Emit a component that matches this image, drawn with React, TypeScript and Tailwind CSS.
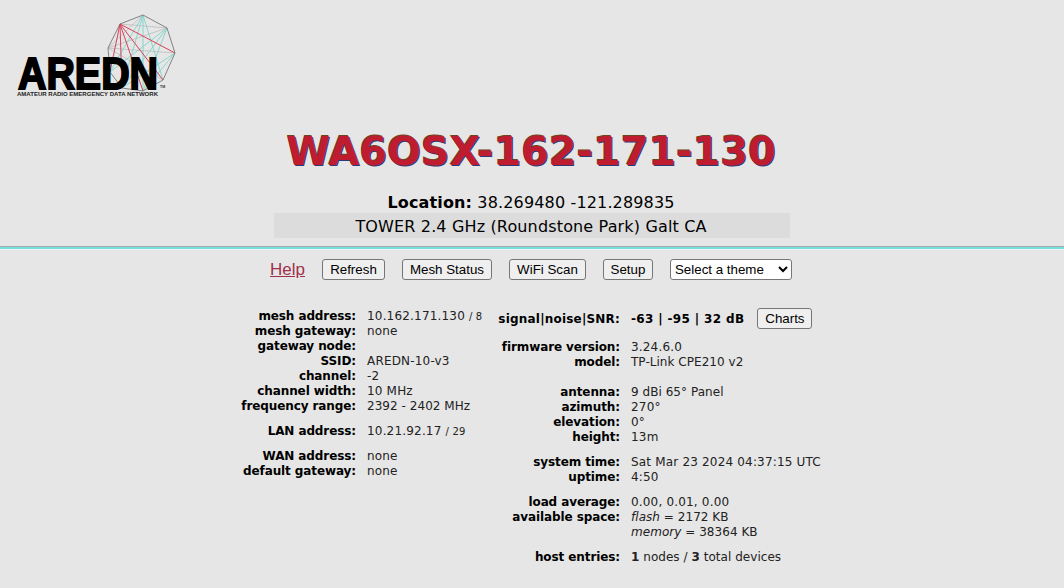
import React from 'react';

const Logo: React.FC = () => {
  const pts: [number, number][] = [
    [143, 15], [167, 28], [175, 53], [163, 80], [143, 91], [122, 88], [110, 72], [108, 48], [120, 24],
  ];
  const red = [[120, 24, 175, 53], [120, 24, 163, 80], [120, 24, 143, 91], [120, 24, 122, 88], [120, 24, 110, 72]];
  const teal = [[143, 15, 163, 80], [143, 15, 143, 91], [143, 15, 122, 88], [167, 28, 143, 91], [167, 28, 122, 88], [167, 28, 110, 72], [175, 53, 122, 88], [175, 53, 143, 91], [143, 15, 110, 72]];
  const gray = [[108, 48, 175, 53], [108, 48, 163, 80], [120, 24, 167, 28], [108, 48, 143, 15], [108, 48, 167, 28]];
  return (
    <svg width="200" height="110" viewBox="0 0 200 110" className="block">
      {gray.map((l, i) => <line key={i} x1={l[0]} y1={l[1]} x2={l[2]} y2={l[3]} stroke="#bdbdbd" strokeWidth="0.8" />)}
      {teal.map((l, i) => <line key={i} x1={l[0]} y1={l[1]} x2={l[2]} y2={l[3]} stroke="#7fd4c8" strokeWidth="0.9" />)}
      {red.map((l, i) => <line key={i} x1={l[0]} y1={l[1]} x2={l[2]} y2={l[3]} stroke="#d9425a" strokeWidth="1" />)}
      <polygon points={pts.map(p => p.join(',')).join(' ')} fill="none" stroke="#777" strokeWidth="0.9" />
      <text x="18" y="88.5" textLength="140" lengthAdjust="spacingAndGlyphs" fontFamily="Liberation Sans" fontWeight="700" fontSize="45" stroke="#000" strokeWidth="2" fill="#000">AREDN</text>
      <text x="17" y="96" textLength="141" lengthAdjust="spacingAndGlyphs" fontFamily="Liberation Sans" fontWeight="700" fontSize="5.5" fill="#222">AMATEUR RADIO EMERGENCY DATA NETWORK</text>
      <text x="160" y="87.5" fontFamily="Liberation Sans" fontWeight="700" fontSize="3.5" fill="#333">TM</text>
    </svg>
  );
};

const Row: React.FC<{ label?: string; children?: React.ReactNode; labelW: string; tight?: boolean }> = ({ label, children, labelW, tight }) => (
  <div className="flex h-[15px] items-center leading-[15px]">
    <div className={`${labelW} shrink-0 text-right font-bold tracking-[-0.1px] whitespace-nowrap`}>{label ? `${label}:` : ''}</div>
    <div className={`ml-[11px] whitespace-nowrap text-[#222] ${tight ? 'tracking-[0.04px]' : 'tracking-[0.18px]'}`}>{children}</div>
  </div>
);

const btn = 'h-[21px] rounded-[3px] border border-[#767676] bg-[#efefef] font-["Liberation_Sans",sans-serif] text-[13.33px] text-black';

const App: React.FC = () => {
  const l = 'w-[120px]';
  const r = 'w-[130px]';
  return (
    <div className='h-[588px] w-[1064px] overflow-hidden bg-[#e6e6e6] font-["DejaVu_Sans",sans-serif] text-[12px] text-black'>
      <div className="h-[110px]">
        <Logo />
      </div>
      <h1
        className='mt-[17px] h-[48px] pr-[2px] text-center text-[39.8px] leading-[48px] font-bold text-[#c01c30]'
        style={{ textShadow: '1px 1px 0 #2b3a78, -0.7px -0.7px 0 #6e4420' }}
      >
        WA6OSX-162-171-130
      </h1>
      <div className="mt-[18px] text-center text-[16px] leading-[20px] tracking-[0.15px]">
        <div className="pr-[2px]"><b>Location:</b> 38.269480 -121.289835</div>
        <div className="mx-auto h-[25px] w-[516px] bg-[#dcdcdc] pr-[2px] leading-[27px]">TOWER 2.4 GHz (Roundstone Park) Galt CA</div>
      </div>
      <div className="mt-[8px] h-[4px] border-t border-b border-t-[#a9a9a9] border-b-[#f2f2f2] bg-[#70e0e0]" />
      <div className="mt-[9px] flex h-[21px] items-center pl-[270px]">
        <a className='mr-[17px] font-["Liberation_Sans",sans-serif] text-[17px] text-[#a0304a] underline'>Help</a>
        <button className={`${btn} w-[63px]`}>Refresh</button>
        <button className={`${btn} ml-[17px] w-[90px]`}>Mesh Status</button>
        <button className={`${btn} ml-[17px] w-[77px]`}>WiFi Scan</button>
        <button className={`${btn} ml-[17px] w-[50px]`}>Setup</button>
        <select className={`${btn} ml-[17px] w-[122px] bg-white`} defaultValue="t">
          <option value="t">Select a theme</option>
        </select>
      </div>
      <div className="mt-[29px] flex pl-[236px]">
        <div className="w-[254px]">
          <Row labelW={l} label="mesh address">10.162.171.130 <span className="text-[10px]">/ 8</span></Row>
          <Row labelW={l} label="mesh gateway">none</Row>
          <Row labelW={l} label="gateway node" />
          <Row labelW={l} label="SSID">AREDN-10-v3</Row>
          <Row labelW={l} label="channel">-2</Row>
          <Row labelW={l} label="channel width">10 MHz</Row>
          <Row labelW={l} label="frequency range" tight>2392 - 2402 MHz</Row>
          <div className="mt-[10px]">
            <Row labelW={l} label="LAN address">10.21.92.17 <span className="text-[10px]">/ 29</span></Row>
          </div>
          <div className="mt-[10px]">
            <Row labelW={l} label="WAN address">none</Row>
            <Row labelW={l} label="default gateway">none</Row>
          </div>
        </div>
        <div>
          <div className="-mt-px flex h-[21px] items-center">
            <div className={`${r} shrink-0 text-right font-bold tracking-[0.2px]`}>signal|noise|SNR:</div>
            <div className="ml-[11px] font-bold tracking-[0.35px]">-63 | -95 | 32 dB</div>
            <button className={`${btn} ml-[13px] w-[55px]`}>Charts</button>
          </div>
          <div className="mt-[11px]">
            <Row labelW={r} label="firmware version">3.24.6.0</Row>
            <Row labelW={r} label="model" tight>TP-Link CPE210 v2</Row>
          </div>
          <div className="mt-[15px]">
            <Row labelW={r} label="antenna" tight>9 dBi 65° Panel</Row>
            <Row labelW={r} label="azimuth">270°</Row>
            <Row labelW={r} label="elevation">0°</Row>
            <Row labelW={r} label="height">13m</Row>
          </div>
          <div className="mt-[10px]">
            <Row labelW={r} label="system time">Sat Mar 23 2024 04:37:15 UTC</Row>
            <Row labelW={r} label="uptime">4:50</Row>
          </div>
          <div className="mt-[10px]">
            <Row labelW={r} label="load average">0.00, 0.01, 0.00</Row>
            <Row labelW={r} label="available space" tight><i>flash</i> = 2172 KB</Row>
            <Row labelW={r} tight><i>memory</i> = 38364 KB</Row>
          </div>
          <div className="mt-[10px]">
            <Row labelW={r} label="host entries" tight><b>1</b> nodes / <b>3</b> total devices</Row>
          </div>
        </div>
      </div>
    </div>
  );
};

export default App;
